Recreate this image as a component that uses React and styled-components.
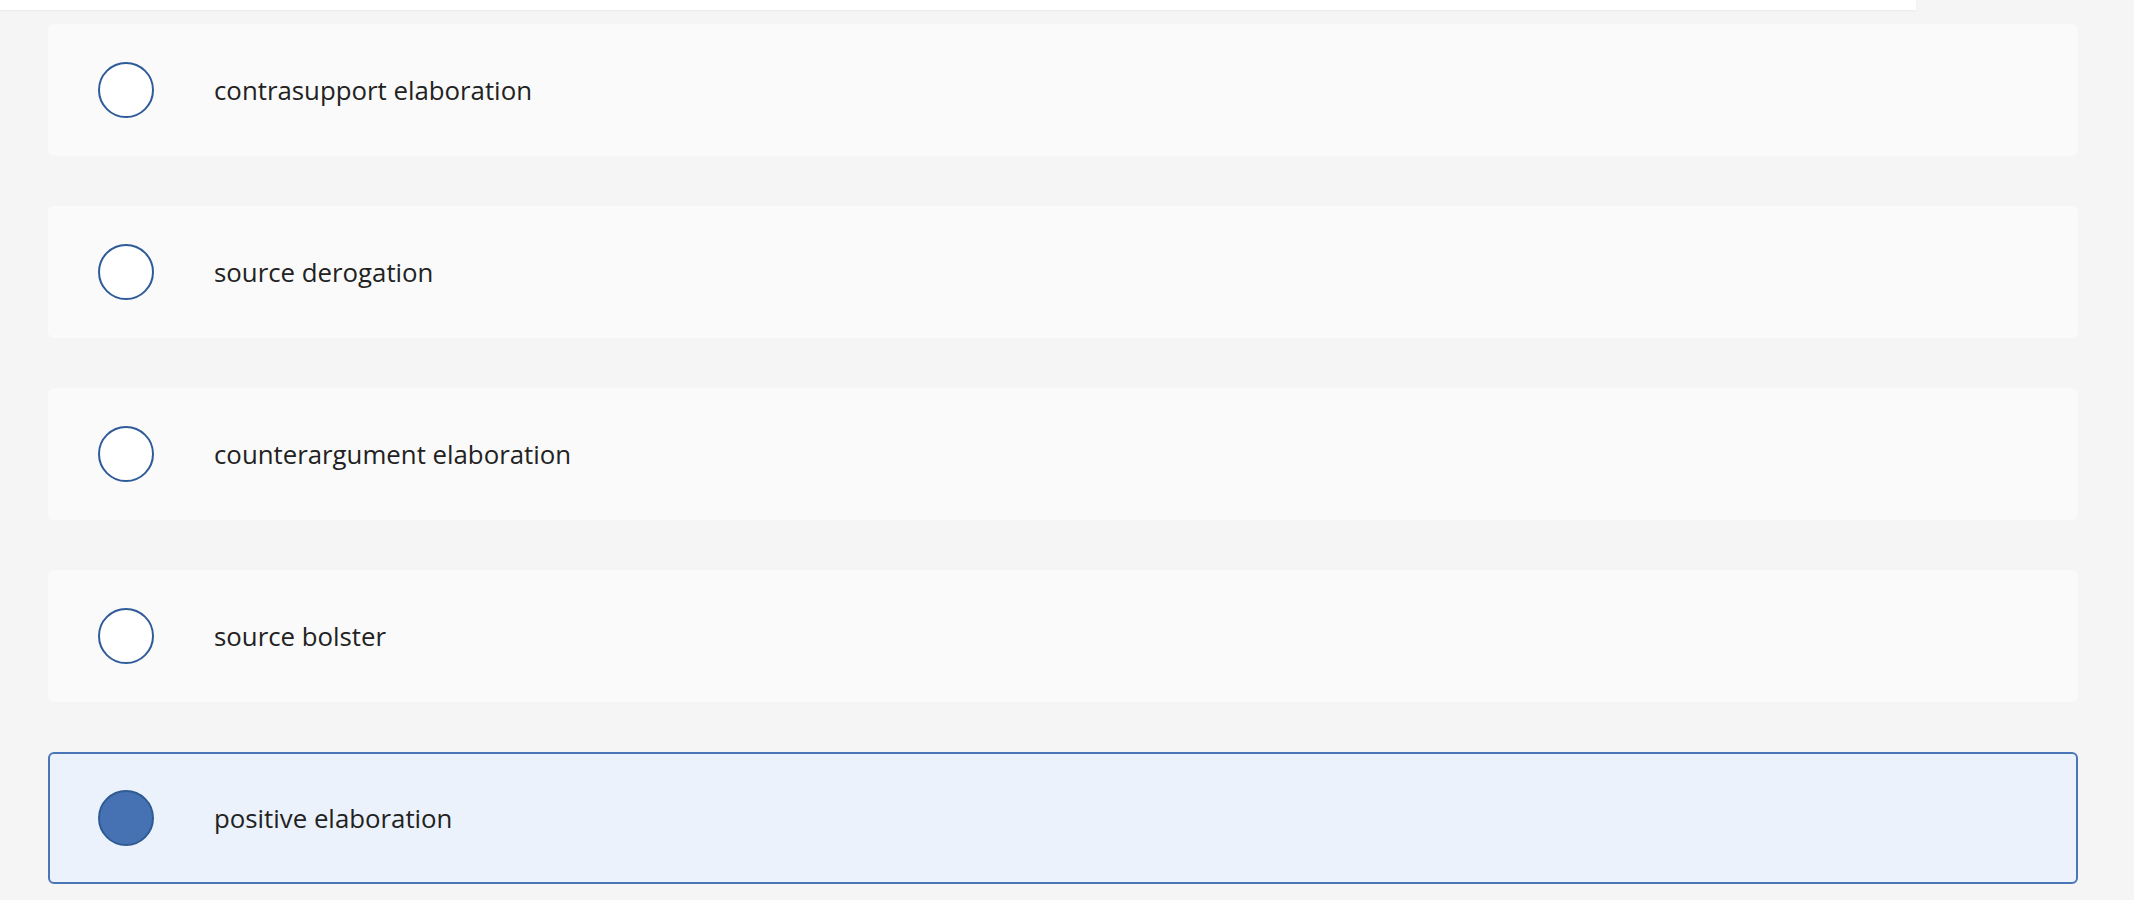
import React from 'react';
import styled, { createGlobalStyle } from 'styled-components';

const GlobalStyle = createGlobalStyle`
	html, body {
		margin: 0;
		padding: 0;
		background: #f5f5f5;
	}
	body {
		font-family: "Open Sans", Lato, sans-serif;
		color: #222;
	}
`;

const Page = styled.div`
	min-height: 900px;
	background: #f5f5f5;
`;

const TopBar = styled.div`
	width: 1916px;
	height: 10px;
	background: #fff;
	box-shadow: 0 1px 2px rgba(0, 0, 0, 0.05);
`;

const List = styled.div`
	display: flex;
	flex-direction: column;
	gap: 50px;
	padding: 14px 56px 0 48px;
`;

const Choice = styled.label`
	display: flex;
	align-items: center;
	box-sizing: border-box;
	height: 132px;
	padding-left: ${p => (p.selected ? 48 : 50)}px;
	border-radius: 6px;
	background: ${p => (p.selected ? '#ebf2fb' : '#fafafa')};
	border: ${p => (p.selected ? '2px solid #4a76b8' : 'none')};
	cursor: pointer;
`;

const Radio = styled.span`
	box-sizing: border-box;
	width: 56px;
	height: 56px;
	flex-shrink: 0;
	border-radius: 50%;
	background: ${p => (p.selected ? '#4672b3' : '#fff')};
	border: 2px solid ${p => (p.selected ? '#2f5b94' : '#2f5b99')};
`;

const Label = styled.span`
	margin-left: 60px;
	font-size: 25.8px;
	color: #222;
`;

const options = [
	'contrasupport elaboration',
	'source derogation',
	'counterargument elaboration',
	'source bolster',
	'positive elaboration',
];

const App = () => {
	const selected = 4;
	return (
		<Page>
			<GlobalStyle />
			<TopBar />
			<List>
				{options.map((text, i) => (
					<Choice key={text} selected={i === selected}>
						<Radio selected={i === selected} />
						<Label>{text}</Label>
					</Choice>
				))}
			</List>
		</Page>
	);
};

export default App;
